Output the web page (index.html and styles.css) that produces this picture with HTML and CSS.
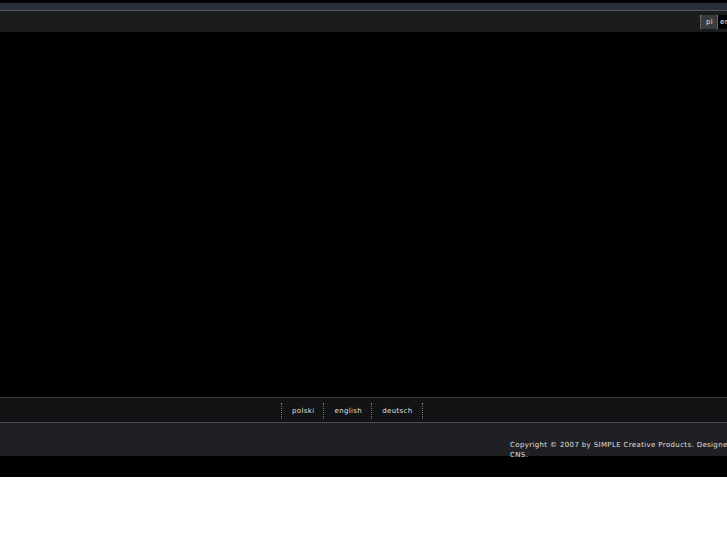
FILE: index.html
```html
<!DOCTYPE html>
<html lang="en">
<head>
    <meta charset="UTF-8">
    <meta name="viewport" content="width=device-width, initial-scale=1.0">
    <title>SIMPLE Creative Products</title>
    <link rel="stylesheet" href="styles.css">
</head>
<body>
<div class="page">
    <div class="topstrip"></div>
    <div class="langbar">
        <a class="lang lang-active" href="#">pl</a>
        <a class="lang" href="#">en</a>
    </div>
    <div class="content"></div>
    <div class="footmenu">
        <a href="#">polski</a>
        <a href="#">english</a>
        <a href="#">deutsch</a>
    </div>
    <div class="copyright">
        <p>Copyright &copy; 2007 by SIMPLE Creative Products. Designed by CNS.</p>
    </div>
</div>
</body>
</html>
```

FILE: styles.css
```css
html, body {
    margin: 0;
    padding: 0;
    background: #fff;
    overflow: hidden;
}
.page {
    width: 727px;
    height: 477px;
    padding-top: 3px;
    box-sizing: border-box;
    background: #000;
    font-family: "DejaVu Sans", sans-serif;
    font-size: 7px;
    letter-spacing: 0.36px;
    color: #d8d8d8;
    text-shadow: 0 0 1px rgba(255,255,255,.15);
    overflow: hidden;
}
a {
    color: #d8d8d8;
    text-decoration: none;
}
.topstrip {
    height: 7px;
    background: #2a2e38;
    border-bottom: 1px solid #55575b;
}
.langbar {
    height: 21px;
    background: #1b1c1e;
    display: flex;
    align-items: center;
    padding-left: 700px;
    white-space: nowrap;
}
.lang {
    padding: 0 5px;
    line-height: 14px;
}
.lang-active {
    padding-right: 4px;
    background: #3a3b3d;
    border-left: 1px dotted #888;
    border-right: 1px dotted #888;
}
.lang:last-child {
    padding: 0 2px;
    background: #000;
    color: #eee;
}
.content {
    height: 365px;
}
.footmenu {
    height: 23px;
    padding: 1px 0 0 281px;
    background: #121314;
    border-top: 1px solid #33363b;
    border-bottom: 1px solid #4a4c50;
    display: flex;
    align-items: center;
}
.footmenu a {
    padding: 0 9px 0 10px;
    line-height: 16px;
    border-left: 1px dotted #777;
}
.footmenu a:last-child {
    border-right: 1px dotted #777;
}
.copyright {
    height: 33px;
    background: #1f2023;
    padding-left: 510px;
}
.copyright p {
    margin: 0;
    padding-top: 17px;
    width: 240px;
    line-height: 10px;
}
```
